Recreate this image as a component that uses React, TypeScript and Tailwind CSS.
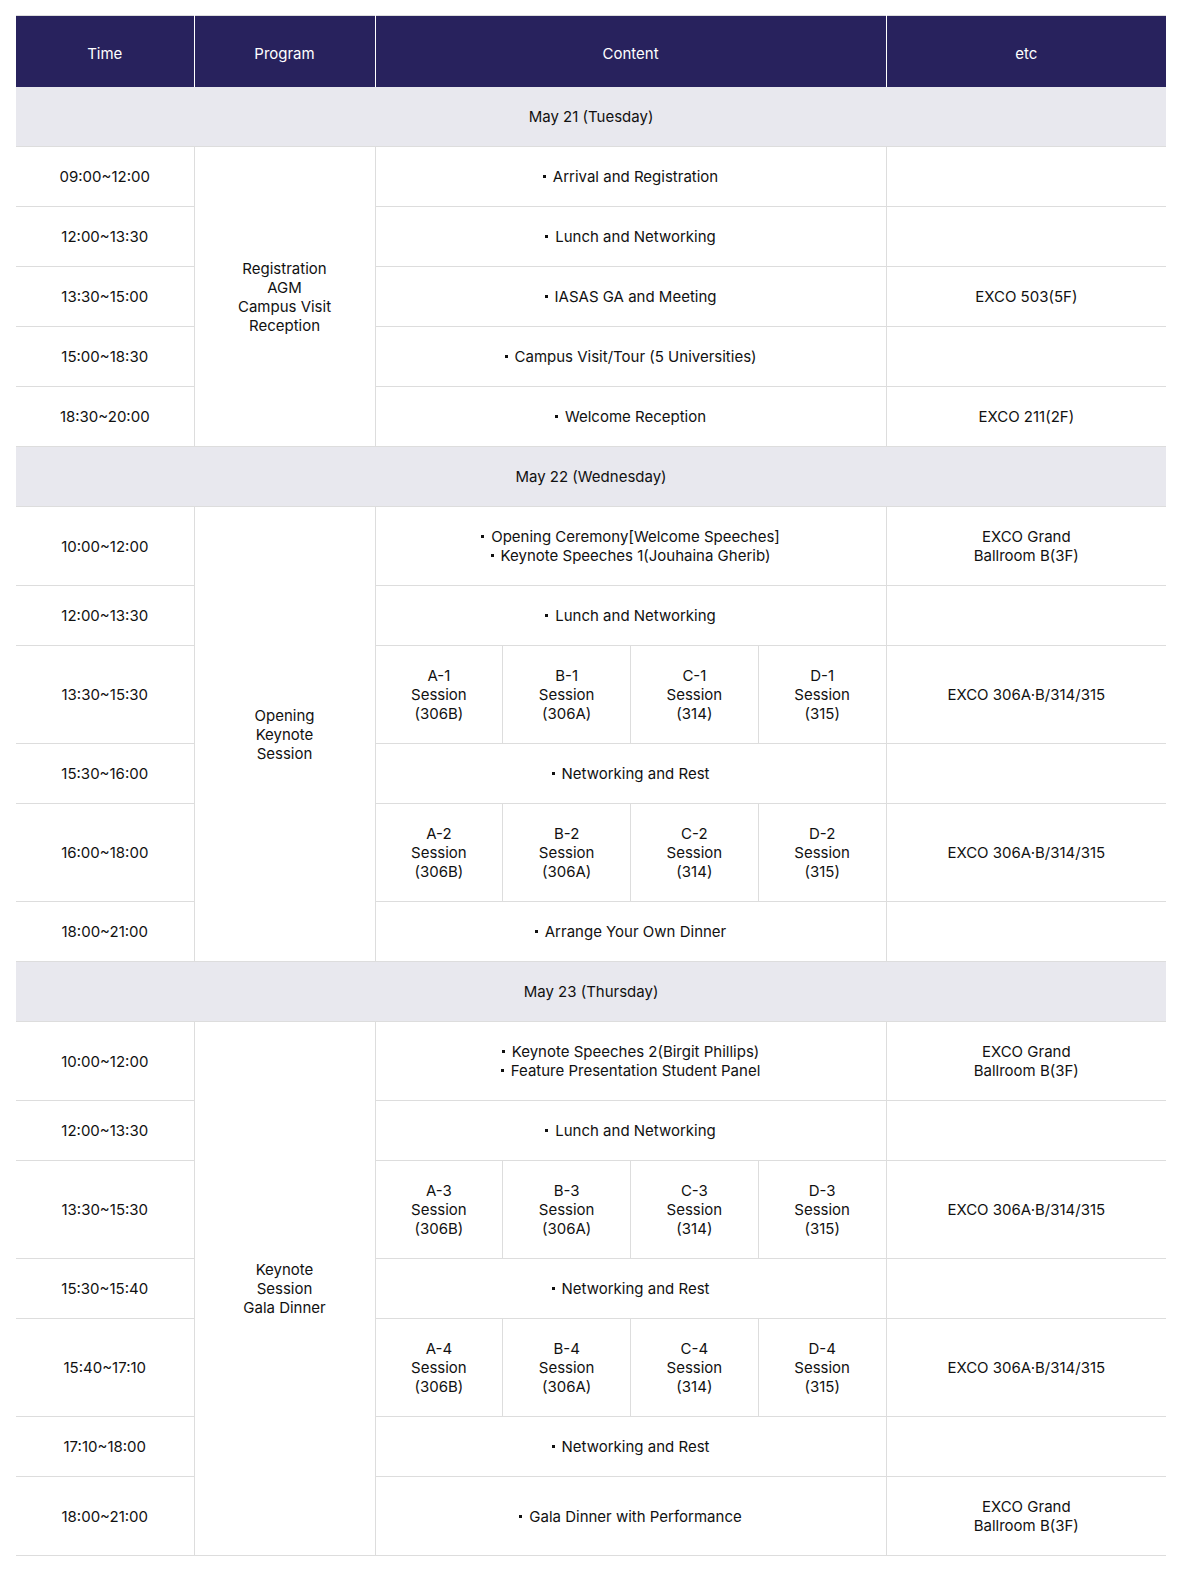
import React from "react";

type Row =
  | { kind: "single"; time: string; content: string[]; etc?: string[]; h: number }
  | { kind: "sessions"; time: string; n: number; etc?: string[]; h: number };

type Day = { date: string; program: string[]; rows: Row[] };

const days: Day[] = [
  {
    date: "May 21 (Tuesday)",
    program: ["Registration", "AGM", "Campus Visit", "Reception"],
    rows: [
      { kind: "single", time: "09:00~12:00", content: ["Arrival and Registration"], h: 60 },
      { kind: "single", time: "12:00~13:30", content: ["Lunch and Networking"], h: 60 },
      { kind: "single", time: "13:30~15:00", content: ["IASAS GA and Meeting"], etc: ["EXCO 503(5F)"], h: 60 },
      { kind: "single", time: "15:00~18:30", content: ["Campus Visit/Tour (5 Universities)"], h: 60 },
      { kind: "single", time: "18:30~20:00", content: ["Welcome Reception"], etc: ["EXCO 211(2F)"], h: 60 },
    ],
  },
  {
    date: "May 22 (Wednesday)",
    program: ["Opening", "Keynote", "Session"],
    rows: [
      {
        kind: "single",
        time: "10:00~12:00",
        content: ["Opening Ceremony[Welcome Speeches]", "Keynote Speeches 1(Jouhaina Gherib)"],
        etc: ["EXCO Grand", "Ballroom B(3F)"],
        h: 79,
      },
      { kind: "single", time: "12:00~13:30", content: ["Lunch and Networking"], h: 60 },
      { kind: "sessions", time: "13:30~15:30", n: 1, etc: ["EXCO 306A·B/314/315"], h: 98 },
      { kind: "single", time: "15:30~16:00", content: ["Networking and Rest"], h: 60 },
      { kind: "sessions", time: "16:00~18:00", n: 2, etc: ["EXCO 306A·B/314/315"], h: 98 },
      { kind: "single", time: "18:00~21:00", content: ["Arrange Your Own Dinner"], h: 60 },
    ],
  },
  {
    date: "May 23 (Thursday)",
    program: ["Keynote", "Session", "Gala Dinner"],
    rows: [
      {
        kind: "single",
        time: "10:00~12:00",
        content: ["Keynote Speeches 2(Birgit Phillips)", "Feature Presentation Student Panel"],
        etc: ["EXCO Grand", "Ballroom B(3F)"],
        h: 79,
      },
      { kind: "single", time: "12:00~13:30", content: ["Lunch and Networking"], h: 60 },
      { kind: "sessions", time: "13:30~15:30", n: 3, etc: ["EXCO 306A·B/314/315"], h: 98 },
      { kind: "single", time: "15:30~15:40", content: ["Networking and Rest"], h: 60 },
      { kind: "sessions", time: "15:40~17:10", n: 4, etc: ["EXCO 306A·B/314/315"], h: 98 },
      { kind: "single", time: "17:10~18:00", content: ["Networking and Rest"], h: 60 },
      {
        kind: "single",
        time: "18:00~21:00",
        content: ["Gala Dinner with Performance"],
        etc: ["EXCO Grand", "Ballroom B(3F)"],
        h: 79,
      },
    ],
  },
];

const rooms = ["306B", "306A", "314", "315"];
const letters = ["A", "B", "C", "D"];

function Lines({ lines, bullet }: { lines: string[]; bullet?: boolean }) {
  return (
    <>
      {lines.map((l, i) => (
        <div key={i}>
          {bullet ? (
            <span className="inline-block w-[3px] h-[3px] bg-[#111] align-middle mr-[7px] relative -top-[1px]" />
          ) : null}
          {l}
        </div>
      ))}
    </>
  );
}

export default function App() {
  return (
    <div
      className="bg-white min-h-[1573px] pt-[15px] px-4 text-[#111] text-[15px] leading-[19px]"
      style={{ fontFamily: "Inter, 'Noto Sans', sans-serif" }}
    >
      <table className="w-[1150px] border-collapse table-fixed text-center">
        <colgroup>
          <col className="w-[178px]" />
          <col className="w-[181px]" />
          <col className="w-[127.75px]" />
          <col className="w-[127.75px]" />
          <col className="w-[127.75px]" />
          <col className="w-[127.75px]" />
          <col className="w-[280px]" />
        </colgroup>
        <thead>
          <tr className="h-[71px] bg-[#28225d] text-white">
            <th className="pt-[4px] font-normal border-t border-t-[#dddddd] border-r border-r-white">Time</th>
            <th className="pt-[4px] font-normal border-t border-t-[#dddddd] border-r border-r-white">Program</th>
            <th colSpan={4} className="pt-[4px] font-normal border-t border-t-[#dddddd] border-r border-r-white">
              Content
            </th>
            <th className="pt-[4px] font-normal border-t border-t-[#dddddd]">etc</th>
          </tr>
        </thead>
        <tbody>
          {days.map((d) => (
            <React.Fragment key={d.date}>
              <tr className="h-[60px] bg-[#e8e8ee]">
                <td colSpan={7} className="border-b border-[#dddddd]">
                  {d.date}
                </td>
              </tr>
              {d.rows.map((r, i) => (
                <tr key={i} style={{ height: r.h }}>
                  <td className="border-b border-[#dddddd]">{r.time}</td>
                  {i === 0 ? (
                    <td rowSpan={d.rows.length} className="border-x border-b border-[#dddddd]">
                      <Lines lines={d.program} />
                    </td>
                  ) : null}
                  {r.kind === "single" ? (
                    <td colSpan={4} className="border-b border-r border-[#dddddd]">
                      <Lines lines={r.content} bullet />
                    </td>
                  ) : (
                    letters.map((L, k) => (
                      <td key={L} className="border-b border-r border-[#dddddd]">
                        <div>
                          {L}-{r.n}
                        </div>
                        <div>Session</div>
                        <div>({rooms[k]})</div>
                      </td>
                    ))
                  )}
                  <td className="border-b border-[#dddddd]">
                    {r.etc ? <Lines lines={r.etc} /> : null}
                  </td>
                </tr>
              ))}
            </React.Fragment>
          ))}
        </tbody>
      </table>
    </div>
  );
}
